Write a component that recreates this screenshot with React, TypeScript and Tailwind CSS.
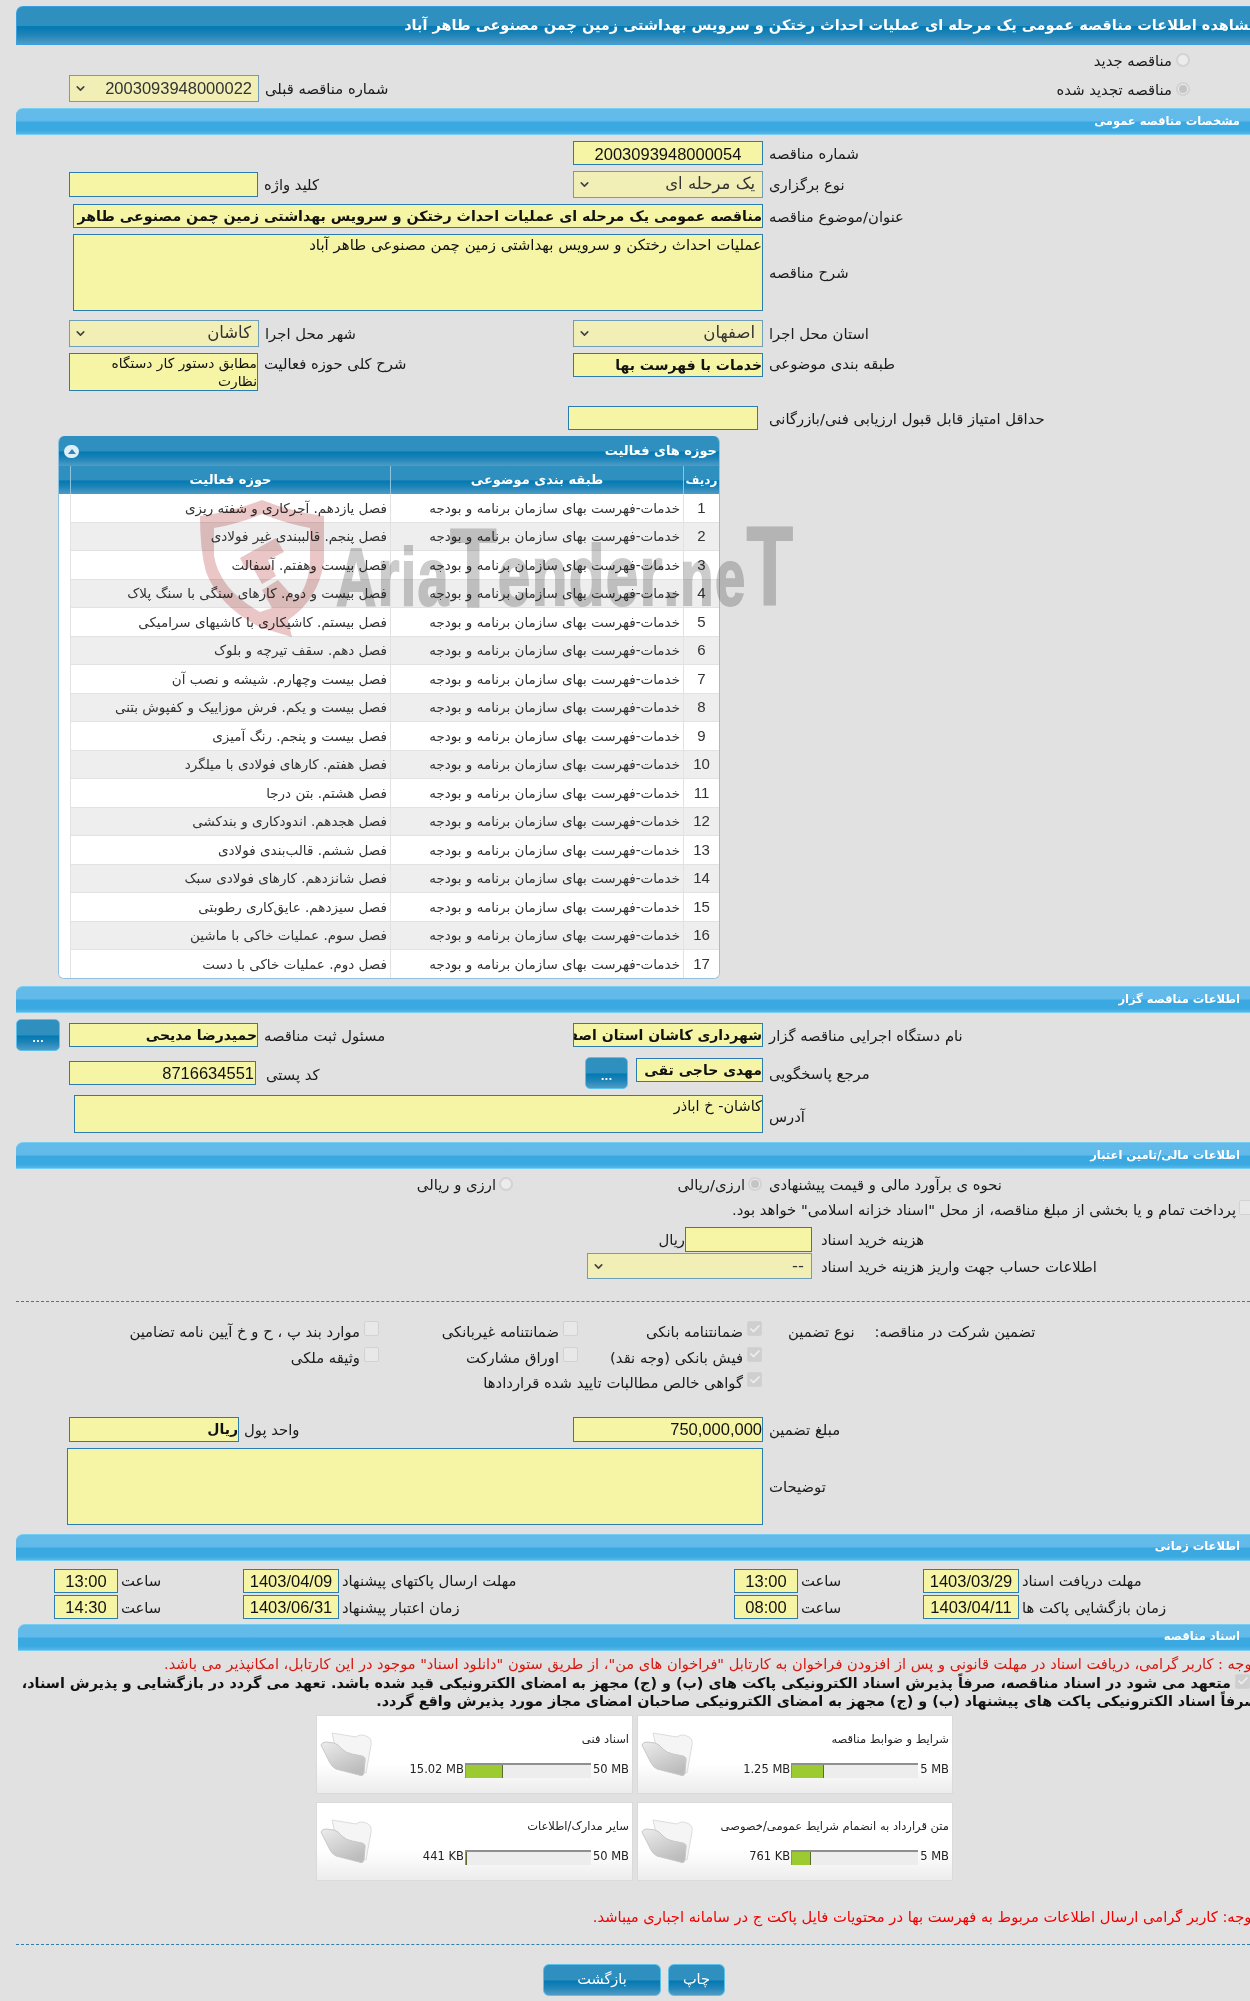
import { ChevronDown, Check } from 'lucide-react';
import type { ReactNode } from 'react';

const darkBar = 'bg-[linear-gradient(to_bottom,#2f90bf_0%,#2f8fbe_50%,#0279b3_53%,#1f84b8_75%,#4f9cc5_100%)]';
const lightBar = 'bg-[linear-gradient(to_bottom,#63bbe9_0%,#61baea_48%,#3aa8e1_52%,#3aa8e1_85%,#58b8e8_100%)]';
const digits = "font-['Liberation_Sans',sans-serif] text-[16.5px]";

const activities = [
  'فصل یازدهم. آجرکاری و شفته ریزی',
  'فصل پنجم. قالببندی غیر فولادی',
  'فصل بیست وهفتم. آسفالت',
  'فصل بیست و دوم. کارهای سنگی با سنگ پلاک',
  'فصل بیستم. کاشیکاری با کاشیهای سرامیکی',
  'فصل دهم. سقف تیرچه و بلوک',
  'فصل بیست وچهارم. شیشه و نصب آن',
  'فصل بیست و یکم. فرش موزاییک و کفپوش بتنی',
  'فصل بیست و پنجم. رنگ آمیزی',
  'فصل هفتم. کارهای فولادی با میلگرد',
  'فصل هشتم. بتن درجا',
  'فصل هجدهم. اندودکاری و بندکشی',
  'فصل ششم. قالب‌بندی فولادی',
  'فصل شانزدهم. کارهای فولادی سبک',
  'فصل سیزدهم. عایق‌کاری رطوبتی',
  'فصل سوم. عملیات خاکی با ماشین',
  'فصل دوم. عملیات خاکی با دست',
];

function SectionBar({ title, className }: { title: string; className: string }) {
  return (
    <div className={`h-[27px] rounded-tl-[7px] border-b border-t border-[#78cdf3] ${lightBar} flex items-center justify-end pr-[10px] ${className}`}>
      <span dir="rtl" className="text-[11.5px] font-bold text-white">{title}</span>
    </div>
  );
}

function Label({ children, className = '' }: { children: ReactNode; className?: string }) {
  return <span dir="rtl" className={`text-[14.8px] leading-none pt-[2px] whitespace-nowrap text-[#1a1a1a] ${className}`}>{children}</span>;
}

function Field({ children, className }: { children?: ReactNode; className: string }) {
  return (
    <div dir="rtl" className={`bg-[#f6f5a5] border border-[#2a7cb3] text-[#111] overflow-hidden whitespace-nowrap shrink-0 ${className}`}>
      {children}
    </div>
  );
}

function Select({ value, className, num }: { value: string; className: string; num?: boolean }) {
  return (
    <div className={`bg-[#f1efb6] border border-[#6f9db8] text-[#333] flex items-center justify-between pl-[4px] shrink-0 ${className}`}>
      <ChevronDown className="w-[13px] h-[13px] text-[#444]" strokeWidth={3} />
      <span dir="rtl" className={num ? `${digits} pr-[6px]` : 'text-[16.5px] pr-[7px]'}>{value}</span>
    </div>
  );
}

function Radio({ on }: { on?: boolean }) {
  return (
    <span className="w-[14px] h-[14px] rounded-full border-2 border-[#d3d3d3] bg-[#ececec] flex items-center justify-center shrink-0">
      {on && <span className="w-[8px] h-[8px] rounded-full bg-[#c4c4c4]" />}
    </span>
  );
}

function Tick({ on }: { on?: boolean }) {
  return (
    <span className={`w-[15px] h-[15px] rounded-[2px] border border-[#d2d2d2] flex items-center justify-center shrink-0 ${on ? 'bg-[#cfcfcf]' : 'bg-[#e8e8e8]'}`}>
      {on && <Check className="w-[12px] h-[12px] text-[#efefef]" strokeWidth={3.5} />}
    </span>
  );
}

function Guarantee({ label, on }: { label: string; on?: boolean }) {
  return (
    <div className="h-[25.5px] flex justify-end items-start gap-[4px]">
      <Label className="mt-[2px]">{label}</Label>
      <Tick on={on} />
    </div>
  );
}

function Folder() {
  return (
    <svg width="52" height="46" viewBox="0 0 52 46" className="shrink-0">
      <defs>
        <linearGradient id="folderFront" x1="0" y1="0" x2="0.6" y2="1">
          <stop offset="0" stopColor="#ececec" />
          <stop offset="1" stopColor="#bcbcbc" />
        </linearGradient>
      </defs>
      <path d="M12 2 L36 6 Q41 2 48 6 Q52 8 51 14 L46 42 L20 36 Z" fill="#f5f5f5" stroke="#dcdcdc" />
      <path d="M1 14 Q2 11 6 11 L14 12 Q18 13 22 18 Q26 22 32 23 L42 25 Q46 26 45 30 L44 42 Q43 46 39 44 L16 38 Q12 36 10 32 Z" fill="url(#folderFront)" stroke="#c8c8c8" />
    </svg>
  );
}

function DocCard({ title, used, max, pct, barW }: { title: string; used: string; max: string; pct: number; barW: string }) {
  return (
    <div className="h-[79px] bg-[linear-gradient(to_bottom,#ffffff_0%,#ffffff_62%,#ececec_100%)] border border-[#dadada] flex items-center pl-[3px] pr-[3px]">
      <Folder />
      <div className="flex-1 flex flex-col items-end pt-[1px]">
        <span dir="rtl" className="text-[11.5px] text-[#222] whitespace-nowrap mb-[14px]">{title}</span>
        <div className="flex items-center gap-[1px] text-[11.5px] text-[#222] leading-none whitespace-nowrap">
          <span>{used}</span>
          <div className={`h-[15px] bg-[#ededed] border-t-2 border-l border-[#8f8f8f] ${barW}`}>
            <div className="h-full bg-[#9bcb30] border-r border-[#5b6b30]" style={{ width: `${pct}%` }} />
          </div>
          <span className="pl-[1px]">{max}</span>
        </div>
      </div>
    </div>
  );
}

function Watermark() {
  return (
    <div className="absolute left-[200px] top-[500px] w-[610px] h-[140px] pointer-events-none mix-blend-multiply flex items-start">
      <svg width="124" height="137" viewBox="0 0 124 137" className="shrink-0">
        <path
          fillRule="evenodd"
          d="M0 16 Q32 12 62 0 Q92 12 124 16 L124 62 Q118 100 88 120 L92 137 L62 128 Q20 108 6 72 Q0 50 0 16 Z M14 28 L14 56 Q20 90 60 112 L72 108 L62 90 L78 80 L96 100 Q110 84 110 58 L110 28 Q88 24 62 14 Q38 24 14 28 Z"
          fill="#eac6c6"
        />
        <path d="M40 58 L76 38 L84 52 L68 60 L76 76 L62 84 L52 66 L46 70 Z" fill="#eac6c6" />
      </svg>
      <div className="flex items-end font-['Liberation_Sans',sans-serif] font-bold text-[#cccccc] [-webkit-text-stroke:2px_#cccccc] leading-none mt-[10px] ml-[12px] origin-left scale-x-[0.68] tracking-[2px] whitespace-nowrap">
        <span className="text-[82px]">Aria</span>
        <span className="text-[112px] -mb-[6px]">T</span>
        <span className="text-[86px]">ender</span>
        <span className="text-[80px]">.ne</span>
        <span className="text-[112px] -mb-[4px]">T</span>
      </div>
    </div>
  );
}

export default function App() {
  return (
    <div className="relative w-[1250px] h-[2001px] overflow-hidden bg-[#e1e1e1] font-['DejaVu_Sans',sans-serif]">
      {/* Page title */}
      <div className={`mt-[6px] ml-[16px] h-[39px] rounded-tl-[7px] border border-r-0 border-[#3a9fe0] ${darkBar} flex items-center justify-end -mr-[8px] overflow-hidden`}>
        <span dir="rtl" className="text-[14.5px] font-bold text-white whitespace-nowrap">مشاهده اطلاعات مناقصه عمومی یک مرحله ای عملیات احداث رختکن و سرویس بهداشتی زمین چمن مصنوعی طاهر آباد</span>
      </div>

      <div className="flex justify-between h-[63px]">
        <div className="flex items-center gap-[6px] ml-[69px] mt-[30px] h-[27px]">
          <Select value="2003093948000022" className="w-[190px] h-[27px]" num />
          <Label>شماره مناقصه قبلی</Label>
        </div>
        <div className="flex flex-col items-end gap-[12px] mr-[60px] mt-[7px]">
          <div className="flex items-center gap-[4px]"><Label>مناقصه جدید</Label><Radio /></div>
          <div className="flex items-center gap-[4px]"><Label>مناقصه تجدید شده</Label><Radio on /></div>
        </div>
      </div>

      <SectionBar title="مشخصات مناقصه عمومی" className="ml-[16px]" />

      {/* General info */}
      <div className="flex mt-[6px] pl-[573px] items-center gap-[6px]">
        <Field className={`w-[190px] h-[24px] text-center leading-[24px] ${digits}`}>2003093948000054</Field>
        <Label>شماره مناقصه</Label>
      </div>

      <div className="grid grid-cols-[573px_1fr] mt-[6px] h-[27px] items-center">
        <div className="flex items-center gap-[6px] pl-[69px]">
          <Field className="w-[189px] h-[25px]" />
          <Label>کلید واژه</Label>
        </div>
        <div className="flex items-center gap-[6px]">
          <Select value="یک مرحله ای" className="w-[190px] h-[27px]" />
          <Label>نوع برگزاری</Label>
        </div>
      </div>

      <div className="flex items-center gap-[6px] mt-[6px] pl-[73px]">
        <Field className="w-[690px] h-[24px] text-[14.2px] font-bold leading-[22px]">مناقصه عمومی یک مرحله ای عملیات احداث رختکن و سرویس بهداشتی زمین چمن مصنوعی طاهر آباد</Field>
        <Label>عنوان/موضوع مناقصه</Label>
      </div>

      <div className="flex items-center gap-[6px] mt-[6px] pl-[73px]">
        <Field className="w-[690px] h-[77px] text-[15px] leading-[20px]">عملیات احداث رختکن و سرویس بهداشتی زمین چمن مصنوعی طاهر آباد</Field>
        <Label>شرح مناقصه</Label>
      </div>

      <div className="grid grid-cols-[573px_1fr] mt-[9px] h-[27px] items-center">
        <div className="flex items-center gap-[6px] pl-[69px]">
          <Select value="کاشان" className="w-[190px] h-[27px]" />
          <Label>شهر محل اجرا</Label>
        </div>
        <div className="flex items-center gap-[6px]">
          <Select value="اصفهان" className="w-[190px] h-[27px]" />
          <Label>استان محل اجرا</Label>
        </div>
      </div>

      <div className="grid grid-cols-[573px_1fr] mt-[6px] items-start">
        <div className="flex items-start gap-[6px] pl-[69px]">
          <Field className="w-[189px] h-[38px] text-[13.8px] leading-[18px]">مطابق دستور کار دستگاه<br />نظارت</Field>
          <Label className="mt-[2px]">شرح کلی حوزه فعالیت</Label>
        </div>
        <div className="flex items-start gap-[6px]">
          <Field className="w-[190px] h-[24px] text-[14px] font-bold leading-[22px]">خدمات با فهرست بها</Field>
          <Label className="mt-[2px]">طبقه بندی موضوعی</Label>
        </div>
      </div>

      <div className="flex items-center gap-[11px] mt-[15px] pl-[568px]">
        <Field className="w-[190px] h-[24px]" />
        <Label>حداقل امتیاز قابل قبول ارزیابی فنی/بازرگانی</Label>
      </div>

      {/* Activity table */}
      <div className="mt-[6px] ml-[58px] w-[662px] h-[543px] rounded-[6px] overflow-hidden border-r border-l border-b border-[#8fc1e0] bg-white">
        <div className={`h-[30px] ${darkBar} flex items-center justify-between pl-[5px] pr-[2px]`}>
          <span className="w-[15px] h-[13px] rounded-full bg-[#dfeef6] flex items-center justify-center">
            <span className="w-0 h-0 border-l-[4px] border-r-[4px] border-b-[5px] border-l-transparent border-r-transparent border-b-[#2b86b5]" />
          </span>
          <span dir="rtl" className="text-[13px] font-bold text-white">حوزه های فعالیت</span>
        </div>
        <div className={`h-[28px] ${darkBar} flex text-white text-[13px] font-bold`}>
          <div className="w-[12px] border-r border-[#8fc4de]" />
          <div dir="rtl" className="w-[320px] border-r border-[#8fc4de] flex items-center justify-center">حوزه فعالیت</div>
          <div dir="rtl" className="w-[293px] border-r border-[#8fc4de] flex items-center justify-center">طبقه بندی موضوعی</div>
          <div dir="rtl" className="flex-1 flex items-center justify-center text-[12px]">ردیف</div>
        </div>
        {activities.map((a, i) => (
          <div key={a} className="h-[28.5px] flex text-[13.5px] text-[#333]">
            <div className="w-[12px] border-r border-[#e2e2e2] bg-white" />
            <div className={`w-[320px] border-r border-b border-[#e2e2e2] flex items-center justify-end pr-[3px] ${i % 2 ? 'bg-[#eeeeee]' : 'bg-white'}`}>
              <span dir="rtl" className="whitespace-nowrap">{a}</span>
            </div>
            <div className={`w-[293px] border-r border-b border-[#e2e2e2] flex items-center justify-end pr-[3px] ${i % 2 ? 'bg-[#eeeeee]' : 'bg-white'}`}>
              <span dir="rtl" className="whitespace-nowrap">خدمات-فهرست بهای سازمان برنامه و بودجه</span>
            </div>
            <div className={`flex-1 border-b border-[#e2e2e2] flex items-center justify-center text-[15px] font-['Liberation_Sans',sans-serif] ${i % 2 ? 'bg-[#eeeeee]' : 'bg-white'}`}>{i + 1}</div>
          </div>
        ))}
      </div>

      <SectionBar title="اطلاعات مناقصه گزار" className="ml-[16px] mt-[7px]" />

      {/* Tender organiser */}
      <div className="grid grid-cols-[573px_1fr] mt-[6px] h-[32px] items-center">
        <div className="flex items-center pl-[16px]">
          <button className={`w-[44px] h-[32px] rounded-[5px] border border-[#5cc0ea] ${darkBar} text-white text-[10px] font-bold leading-none pt-[8px]`}>...</button>
          <Field className="w-[189px] h-[24px] ml-[9px] text-[14px] font-bold leading-[22px]">حمیدرضا مدیحی</Field>
          <Label className="ml-[6px]">مسئول ثبت مناقصه</Label>
        </div>
        <div className="flex items-center gap-[6px]">
          <Field className="w-[190px] h-[24px] text-[14px] font-bold leading-[22px]">شهرداری کاشان استان اصفهان</Field>
          <Label>نام دستگاه اجرایی مناقصه گزار</Label>
        </div>
      </div>

      <div className="grid grid-cols-[573px_1fr] mt-[6px] h-[32px] items-start">
        <div className="flex items-center gap-[10px] pl-[69px] mt-[4px]">
          <Field className={`w-[187px] h-[24px] leading-[22px] pr-[1px] ${digits}`}>8716634551</Field>
          <Label className="mt-[2px]">کد پستی</Label>
        </div>
        <div className="flex items-start pl-[12px]">
          <button className={`w-[43px] h-[32px] rounded-[5px] border border-[#5cc0ea] ${darkBar} text-white text-[10px] font-bold leading-none pt-[8px]`}>...</button>
          <Field className="w-[127px] h-[24px] ml-[8px] mt-[1px] text-[14px] font-bold leading-[22px]">مهدی حاجی تقی</Field>
          <Label className="ml-[6px] mt-[8px]">مرجع پاسخگویی</Label>
        </div>
      </div>

      <div className="flex items-center gap-[6px] mt-[6px] pl-[74px]">
        <Field className="w-[689px] h-[38px] text-[14.5px] leading-[20px]">کاشان- خ اباذر</Field>
        <Label className="mt-[4px]">آدرس</Label>
      </div>

      <SectionBar title="اطلاعات مالی/تامین اعتبار" className="ml-[16px] mt-[9px]" />

      {/* Financial */}
      <div className="flex items-center h-[20px] mt-[5px]">
        <div className="flex items-center justify-end gap-[3px] ml-[423px] w-[90px]"><Label>ارزی و ریالی</Label><Radio /></div>
        <div className="flex items-center justify-end gap-[3px] ml-[158px] w-[91px]"><Label>ارزی/ریالی</Label><Radio on /></div>
        <Label className="ml-[7px]">نحوه ی برآورد مالی و قیمت پیشنهادی</Label>
      </div>

      <div className="flex justify-end items-start mt-[6px] h-[18px] -mr-[4px]">
        <Label className="mt-[1px] mr-[3px]">پرداخت تمام و یا بخشی از مبلغ مناقصه، از محل "اسناد خزانه اسلامی" خواهد بود.</Label>
        <Tick />
      </div>

      <div className="flex items-center mt-[9px] pl-[662px]">
        <Label className="w-[23px] text-[13px]">ریال</Label>
        <Field className="w-[127px] h-[25px]" />
        <Label className="ml-[9px]">هزینه خرید اسناد</Label>
      </div>

      <div className="flex items-center mt-[1px] pl-[587px] gap-[9px]">
        <Select value="--" className="w-[225px] h-[26px]" />
        <Label>اطلاعات حساب جهت واریز هزینه خرید اسناد</Label>
      </div>

      <div className="mt-[22px] ml-[16px] border-t border-dashed border-[#2f7fa8]" />

      {/* Guarantees */}
      <div className="flex mt-[19px]">
        <div className="grid grid-cols-[379px_199px_184px] w-[762px]">
          <Guarantee label="موارد بند پ ، ح و خ آیین نامه تضامین" />
          <Guarantee label="ضمانتنامه غیربانکی" />
          <Guarantee label="ضمانتنامه بانکی" on />
          <Guarantee label="وثیقه ملکی" />
          <Guarantee label="اوراق مشارکت" />
          <Guarantee label="فیش بانکی (وجه نقد)" on />
          <div />
          <div />
          <Guarantee label="گواهی خالص مطالبات تایید شده قراردادها" on />
        </div>
        <Label className="ml-[26px] mt-[2px] h-fit">نوع تضمین</Label>
        <Label className="ml-[20px] mt-[2px] h-fit">تضمین شرکت در مناقصه:</Label>
      </div>

      <div className="grid grid-cols-[573px_1fr] mt-[19px] items-center">
        <div className="flex items-center gap-[5px] pl-[69px]">
          <Field className="w-[170px] h-[25px] text-[14px] font-bold leading-[23px]">ریال</Field>
          <Label>واحد پول</Label>
        </div>
        <div className="flex items-center gap-[6px]">
          <Field className={`w-[190px] h-[25px] leading-[23px] ${digits}`}>750,000,000</Field>
          <Label>مبلغ تضمین</Label>
        </div>
      </div>

      <div className="flex items-center gap-[6px] mt-[6px] pl-[67px]">
        <Field className="w-[696px] h-[77px]" />
        <Label>توضیحات</Label>
      </div>

      <SectionBar title="اطلاعات زمانی" className="ml-[16px] mt-[9px]" />

      {/* Dates */}
      <div className="flex flex-col gap-[2px] mt-[8px] pl-[54px]">
        {[
          ['13:00', '1403/04/09', 'مهلت ارسال پاکتهای پیشنهاد', '13:00', '1403/03/29', 'مهلت دریافت اسناد'],
          ['14:30', '1403/06/31', 'زمان اعتبار پیشنهاد', '08:00', '1403/04/11', 'زمان بازگشایی پاکت ها'],
        ].map(r => (
          <div key={r[1]} className="flex items-center h-[24.5px]">
            <div className="w-[189px] flex items-center gap-[3px]">
              <Field className={`w-[64px] h-[24px] text-center leading-[22px] ${digits}`}>{r[0]}</Field>
              <Label>ساعت</Label>
            </div>
            <div className="w-[491px] flex items-center gap-[3px]">
              <Field className={`w-[96px] h-[24px] text-center leading-[22px] ${digits}`}>{r[1]}</Field>
              <Label>{r[2]}</Label>
            </div>
            <div className="w-[189px] flex items-center gap-[3px]">
              <Field className={`w-[64px] h-[24px] text-center leading-[22px] ${digits}`}>{r[3]}</Field>
              <Label>ساعت</Label>
            </div>
            <div className="flex items-center gap-[3px]">
              <Field className={`w-[96px] h-[24px] text-center leading-[22px] ${digits}`}>{r[4]}</Field>
              <Label>{r[5]}</Label>
            </div>
          </div>
        ))}
      </div>

      <SectionBar title="اسناد مناقصه" className="ml-[18px] mt-[4px]" />

      {/* Documents */}
      <div className="flex justify-end mt-[5px] h-[16px] -mr-[6px]">
        <span dir="rtl" className="text-[14.6px] leading-[16px] text-[#d8160f] whitespace-nowrap">توجه : کاربر گرامی، دریافت اسناد در مهلت قانونی و پس از افزودن فراخوان به کارتابل "فراخوان های من"، از طریق ستون "دانلود اسناد" موجود در این کارتابل، امکانپذیر می باشد.</span>
      </div>
      <div className="flex justify-end items-start mt-[2px] h-[18px]">
        <span dir="rtl" className="text-[14.35px] leading-[18px] font-bold text-[#111] whitespace-nowrap mr-[4px]">متعهد می شود در اسناد مناقصه، صرفاً پذیرش اسناد الکترونیکی پاکت های (ب) و (ج) مجهز به امضای الکترونیکی قید شده باشد. تعهد می گردد در بازگشایی و پذیرش اسناد،</span>
        <Tick on />
      </div>
      <div className="flex justify-end h-[18px] -mr-[8px]">
        <span dir="rtl" className="text-[14.35px] leading-[18px] font-bold text-[#111] whitespace-nowrap">صرفاً اسناد الکترونیکی پاکت های پیشنهاد (ب) و (ج) مجهز به امضای الکترونیکی صاحبان امضای مجاز مورد پذیرش واقع گردد.</span>
      </div>

      <div className="grid grid-cols-[317px_316px] gap-x-[4px] gap-y-[8px] mt-[5px] ml-[316px] w-[637px]">
        <DocCard title="اسناد فنی" used="15.02 MB" max="50 MB" pct={30} barW="w-[126px]" />
        <DocCard title="شرایط و ضوابط مناقصه" used="1.25 MB" max="5 MB" pct={25} barW="w-[127px]" />
        <DocCard title="سایر مدارک/اطلاعات" used="441 KB" max="50 MB" pct={1} barW="w-[126px]" />
        <DocCard title="متن قرارداد به انضمام شرایط عمومی/خصوصی" used="761 KB" max="5 MB" pct={15} barW="w-[127px]" />
      </div>

      <div className="flex justify-end mt-[27px] h-[18px] -mr-[6px]">
        <span dir="rtl" className="text-[14.7px] leading-[18px] text-[#f00000] whitespace-nowrap">توجه: کاربر گرامی ارسال اطلاعات مربوط به فهرست بها در محتویات فایل پاکت ج در سامانه اجباری میباشد.</span>
      </div>

      <div className="mt-[18px] ml-[16px] border-t border-dashed border-[#2f7fa8]" />

      <div className="flex gap-[7px] mt-[19px] ml-[543px]">
        <button className={`w-[118px] h-[32px] rounded-[6px] border border-[#5cc0ea] ${darkBar} text-white text-[14.5px]`}>بازگشت</button>
        <button className={`w-[57px] h-[32px] rounded-[6px] border border-[#5cc0ea] ${darkBar} text-white text-[14.5px]`}>چاپ</button>
      </div>

      <Watermark />
    </div>
  );
}
